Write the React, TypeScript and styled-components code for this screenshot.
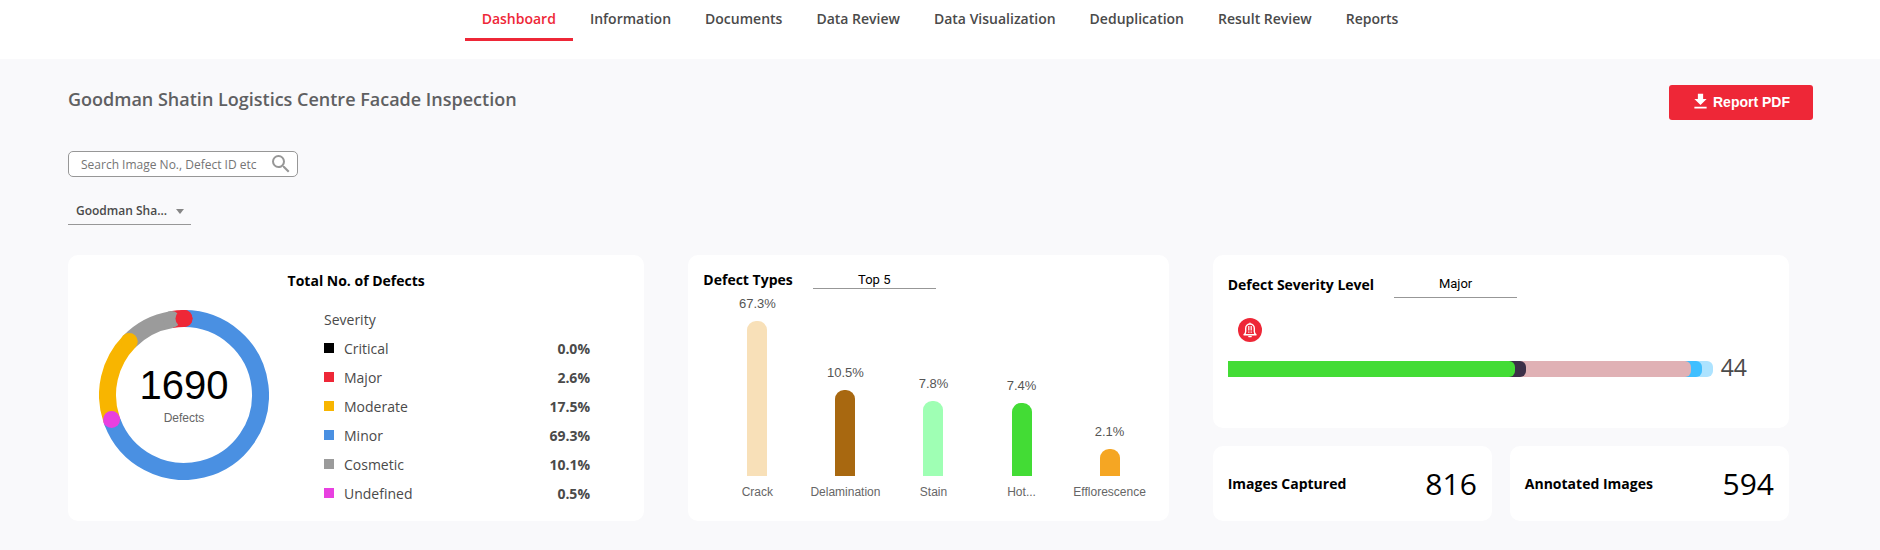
import React from "react";
import styled, { createGlobalStyle } from "styled-components";
import { MdSearch, MdFileDownload } from "react-icons/md";

const GlobalStyle = createGlobalStyle`
  *, *::before, *::after { box-sizing: border-box; }
  body {
    margin: 0;
    background: #f9f9fb;
    color: #4a4a4a;
    font-family: "Open Sans", sans-serif;
    font-size: 14px;
    line-height: 20px;
  }
`;

const Header = styled.header`
  background: #fff;
  height: 59px;
`;

const Nav = styled.nav`
  display: flex;
  justify-content: center;
`;

const Tab = styled.a<{ $active?: boolean }>`
  padding: 9px 17px;
  border-bottom: 3px solid ${(p) => (p.$active ? "#ee2737" : "transparent")};
  color: ${(p) => (p.$active ? "#ee2737" : "#4a4a4a")};
  font-weight: 600;
  text-decoration: none;
`;

const Main = styled.main`
  padding: 26px 67px 29px 68px;
`;

const TitleRow = styled.div`
  display: flex;
  justify-content: space-between;
  align-items: flex-start;
`;

const PageTitle = styled.h1`
  margin: 0;
  padding: 2px 0;
  font-size: 18px;
  line-height: 24px;
  font-weight: 600;
  color: #5f6062;
`;

const ReportButton = styled.button`
  display: flex;
  align-items: center;
  justify-content: center;
  gap: 2px;
  width: 144px;
  height: 35px;
  padding: 0 8px 2px 6px;
  border: 0;
  border-radius: 3px;
  background: #ee2737;
  color: #fff;
  font: bold 14px "Liberation Sans", sans-serif;
`;

const SearchBox = styled.label`
  display: flex;
  align-items: center;
  width: 230px;
  height: 26px;
  margin-top: 31px;
  padding: 0 4px 0 12px;
  border: 1px solid #979797;
  border-radius: 5px;
  background: #fff;
  color: #979797;
`;

const SearchInput = styled.input`
  flex: 1;
  min-width: 0;
  padding: 0;
  border: 0;
  outline: 0;
  background: none;
  font: 12px "Open Sans", sans-serif;
  color: #4a4a4a;
  &::placeholder { color: #757575; }
`;

const SelectWrap = styled.div`
  position: relative;
  width: 123px;
`;

const Select = styled.select<{ $size?: "low" | "tall"; $centered?: boolean }>`
  display: block;
  appearance: none;
  width: 100%;
  height: ${(p) => (p.$size === "low" ? 19 : 29)}px;
  padding: ${(p) => (p.$centered ? "0" : "0 24px 0 8px")};
  border: 0;
  border-bottom: 1px solid #979797;
  border-radius: 0;
  background: none;
  color: ${(p) => (p.$centered ? "#000" : "#4a4a4a")};
  font-family: ${(p) => (p.$centered ? "Roboto" : '"Open Sans"')}, sans-serif;
  font-size: ${(p) => (p.$centered ? 13 : 12)}px;
  font-weight: ${(p) => (p.$centered ? 400 : 600)};
  text-align: ${(p) => (p.$centered ? "center" : "left")};
  text-align-last: ${(p) => (p.$centered ? "center" : "left")};
  text-overflow: ellipsis;
`;

const Caret = styled.span`
  position: absolute;
  right: 7px;
  top: 13px;
  border: 4px solid transparent;
  border-top: 5px solid #868686;
  border-bottom: 0;
  pointer-events: none;
`;

const ProjectPicker = styled(SelectWrap)`
  margin-top: 19px;
`;

const Board = styled.div`
  display: grid;
  grid-template-columns: 6fr 5fr 6fr;
  gap: 44px;
  margin: 30px 24px 0 0;
`;

const Card = styled.section`
  min-width: 0;
  border-radius: 10px;
  background: #fff;
`;

const CardTitle = styled.h2`
  margin: 0;
  font-size: 14px;
  line-height: 20px;
  font-weight: 700;
  color: #000;
`;

const TotalsCard = styled(Card)`
  padding: 16px 31px 15px;
  ${CardTitle} { text-align: center; }
`;

const TotalsBody = styled.div`
  display: flex;
  align-items: flex-start;
  gap: 55px;
  padding-top: 19px;
`;

const DonutChart = styled.svg`
  display: block;
  flex: none;
`;

const Legend = styled.table`
  width: 266px;
  border-collapse: collapse;
  caption {
    height: 20px;
    text-align: left;
  }
  th {
    display: flex;
    align-items: center;
    gap: 10px;
    height: 29px;
    padding: 9px 0 0;
    font-weight: 400;
  }
  td {
    padding: 9px 0 0;
    text-align: right;
    font-weight: 700;
  }
`;

const Swatch = styled.span<{ $color: string }>`
  width: 10px;
  height: 10px;
  margin-bottom: 2px;
  background: ${(p) => p.$color};
`;

const TypesCard = styled(Card)`
  display: flex;
  flex-direction: column;
  padding: 15px 15px 20px;
`;

const CardHead = styled.div`
  display: flex;
  gap: 20px;
`;

const BarChart = styled.div`
  flex: 1;
  display: grid;
  grid-template-columns: repeat(5, 1fr);
  padding-left: 10px;
`;

const BarColumn = styled.div`
  display: flex;
  flex-direction: column;
  justify-content: flex-end;
  align-items: center;
  font-family: "Liberation Sans", sans-serif;
  font-size: 12px;
  line-height: 18px;
  color: #666;
`;

const BarValue = styled.span`
  font-size: 13px;
  line-height: 18px;
  color: #555;
`;

const Bar = styled.div`
  width: 20px;
  margin: 8px 0 7px;
  border-radius: 9px 9px 0 0;
`;

const SideColumn = styled.div`
  display: flex;
  flex-direction: column;
  gap: 18px;
`;

const SeverityCard = styled(Card)`
  height: 173px;
  padding: 14px 15px;
  ${CardTitle} { padding-top: 6px; }
`;

const AlertIcon = styled.svg`
  display: block;
  margin: 20px 10px 15px;
`;

const StackRow = styled.div`
  display: flex;
  align-items: center;
  gap: 8px;
`;

const StackTrack = styled.div`
  display: grid;
  width: 485px;
`;

const StackTotal = styled.span`
  height: 24px;
  font-size: 23px;
  line-height: 20px;
`;

const StackSegment = styled.div`
  grid-area: 1 / 1;
  height: 16px;
  border-radius: 0 6px 6px 0;
`;

const StatRow = styled.div`
  display: grid;
  grid-template-columns: 1fr 1fr;
  gap: 18px;
`;

const StatCard = styled(Card)`
  display: flex;
  align-items: center;
  justify-content: space-between;
  height: 75px;
  padding: 0 15px;
`;

const StatNumber = styled.span`
  font-size: 30px;
  line-height: 40px;
  font-weight: 400;
  color: #000;
`;

const tabs = [
  "Dashboard", "Information", "Documents", "Data Review",
  "Data Visualization", "Deduplication", "Result Review", "Reports",
];

const severities = [
  { name: "Critical", share: "0.0%", color: "#000000" },
  { name: "Major", share: "2.6%", color: "#ee2737" },
  { name: "Moderate", share: "17.5%", color: "#f8b500" },
  { name: "Minor", share: "69.3%", color: "#4a90e2" },
  { name: "Cosmetic", share: "10.1%", color: "#9b9b9b" },
  { name: "Undefined", share: "0.5%", color: "#e840e0" },
];

// Clockwise arcs in percent of the ring, in painting order.
const arcs = [
  { from: 0, to: 69.3, color: "#4a90e2" },
  { from: 97.4, to: 100, color: "#ee2737" },
  { from: 87.3, to: 97.4, color: "#9b9b9b" },
  { from: 69.8, to: 87.3, color: "#f8b500" },
  { from: 69.3, to: 69.8, color: "#e840e0" },
];

const types = [
  { name: "Crack", value: "67.3%", height: 155, color: "#f8e0b8" },
  { name: "Delamination", value: "10.5%", height: 86, color: "#a86810" },
  { name: "Stain", value: "7.8%", height: 75, color: "#9fffb4" },
  { name: "Hot...", value: "7.4%", height: 73, color: "#43dc35" },
  { name: "Efflorescence", value: "2.1%", height: 27, color: "#f5a623" },
];

// Cumulative ends of the stacked bar, widest first.
const stack = [
  { end: 485, color: "#ade3ff" },
  { end: 474, color: "#40bfff" },
  { end: 463, color: "#e0b1b5" },
  { end: 298, color: "#3c3048" },
  { end: 287, color: "#43dc35" },
];

const point = (percent: number) => {
  const a = (percent / 100) * 2 * Math.PI;
  return { x: 85 + 76.5 * Math.sin(a), y: 85 - 76.5 * Math.cos(a) };
};

function Donut() {
  const top = point(0);
  return (
    <DonutChart width="170" height="170" viewBox="0 0 170 170" role="img" aria-label="Defects by severity">
      {arcs.map(({ from, to, color }) => {
        const a = point(from);
        const b = point(to);
        return (
          <g key={color}>
            <path
              d={`M${a.x} ${a.y}A76.5 76.5 0 ${to - from > 50 ? 1 : 0} 1 ${b.x} ${b.y}`}
              fill="none"
              stroke={color}
              strokeWidth="17"
            />
            <circle cx={b.x} cy={b.y} r="8.5" fill={color} />
          </g>
        );
      })}
      <circle cx={top.x} cy={top.y} r="8.5" fill="#ee2737" />
      <text x="85" y="89" textAnchor="middle" fontFamily="Liberation Sans, sans-serif" fontSize="40">1690</text>
      <text x="85" y="112" textAnchor="middle" fontFamily="Liberation Sans, sans-serif" fontSize="12" fill="#666">Defects</text>
    </DonutChart>
  );
}

export default function App() {
  return (
    <>
      <GlobalStyle />
      <Header>
        <Nav>
          {tabs.map((t, i) => (
            <Tab key={t} href="#" $active={i === 0}>{t}</Tab>
          ))}
        </Nav>
      </Header>
      <Main>
        <TitleRow>
          <PageTitle>Goodman Shatin Logistics Centre Facade Inspection</PageTitle>
          <ReportButton type="button">
            <MdFileDownload size={21} />
            Report PDF
          </ReportButton>
        </TitleRow>
        <SearchBox>
          <SearchInput type="text" aria-label="Search" placeholder="Search Image No., Defect ID etc" />
          <MdSearch size={24} />
        </SearchBox>
        <ProjectPicker>
          <Select aria-label="Project">
            <option>Goodman Sha...</option>
          </Select>
          <Caret />
        </ProjectPicker>
        <Board>
          <TotalsCard>
            <CardTitle>Total No. of Defects</CardTitle>
            <TotalsBody>
              <Donut />
              <Legend>
                <caption>Severity</caption>
                <tbody>
                  {severities.map((s) => (
                    <tr key={s.name}>
                      <th scope="row"><Swatch $color={s.color} />{s.name}</th>
                      <td>{s.share}</td>
                    </tr>
                  ))}
                </tbody>
              </Legend>
            </TotalsBody>
          </TotalsCard>
          <TypesCard>
            <CardHead>
              <CardTitle>Defect Types</CardTitle>
              <SelectWrap>
                <Select aria-label="Defect types shown" $size="low" $centered>
                  <option>Top 5</option>
                </Select>
              </SelectWrap>
            </CardHead>
            <BarChart>
              {types.map((t) => (
                <BarColumn key={t.name}>
                  <BarValue>{t.value}</BarValue>
                  <Bar style={{ height: t.height, background: t.color }} />
                  {t.name}
                </BarColumn>
              ))}
            </BarChart>
          </TypesCard>
          <SideColumn>
            <SeverityCard>
              <CardHead>
                <CardTitle>Defect Severity Level</CardTitle>
                <SelectWrap>
                  <Select aria-label="Severity level" $size="tall" $centered>
                    <option>Major</option>
                  </Select>
                </SelectWrap>
              </CardHead>
              <AlertIcon width="24" height="24" viewBox="0 0 24 24" aria-hidden="true">
                <circle cx="12" cy="12" r="12" fill="#ee2737" />
                <path
                  d="M6 16.800c1.200-1 1.700-2 1.700-3.300V10.300a4.300 4.300 0 0 1 8.600 0v3.200c0 1.300.5 2.300 1.700 3.300zM12 5.800V5.200M10.800 18.600h2.400"
                  fill="none" stroke="#fff" strokeWidth="1.400" strokeLinejoin="round" strokeLinecap="round"
                />
                <path d="M10.800 8v4.500M10.800 13.500v1.200M13.200 8v4.500M13.200 13.500v1.200" stroke="#fff" strokeWidth="1.200" />
              </AlertIcon>
              <StackRow>
                <StackTrack>
                  {stack.map((s) => (
                    <StackSegment key={s.color} style={{ width: s.end, background: s.color }} />
                  ))}
                </StackTrack>
                <StackTotal>44</StackTotal>
              </StackRow>
            </SeverityCard>
            <StatRow>
              <StatCard>
                <CardTitle>Images Captured</CardTitle>
                <StatNumber>816</StatNumber>
              </StatCard>
              <StatCard>
                <CardTitle>Annotated Images</CardTitle>
                <StatNumber>594</StatNumber>
              </StatCard>
            </StatRow>
          </SideColumn>
        </Board>
      </Main>
    </>
  );
}
